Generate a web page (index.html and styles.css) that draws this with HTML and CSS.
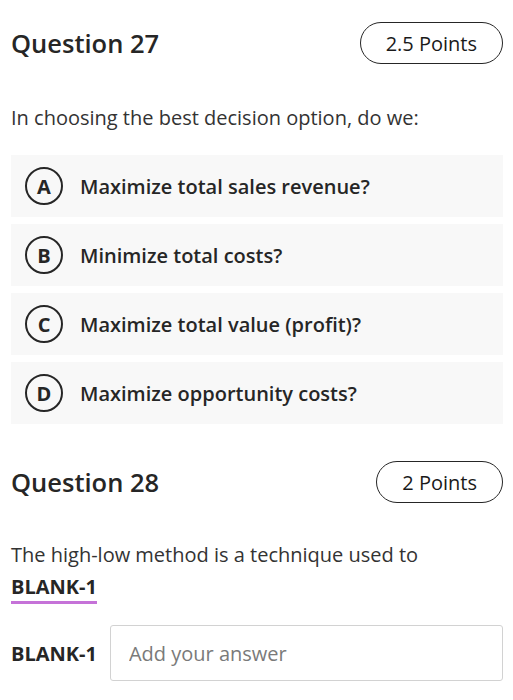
FILE: index.html
```html
<!DOCTYPE html>
<html lang="en">
<head>
<meta charset="utf-8">
<title>Questions</title>
<link rel="stylesheet" href="styles.css">
</head>
<body>
<main class="page">
  <section class="question q27">
    <header class="q-head">
      <h2 class="q-title">Question 27</h2>
      <span class="points">2.5 Points</span>
    </header>
    <p class="q-text">In choosing the best decision option, do we:</p>
    <ul class="options">
      <li class="option"><span class="letter">A</span><span class="opt-text">Maximize total sales revenue?</span></li>
      <li class="option"><span class="letter">B</span><span class="opt-text">Minimize total costs?</span></li>
      <li class="option"><span class="letter">C</span><span class="opt-text">Maximize total value (profit)?</span></li>
      <li class="option"><span class="letter">D</span><span class="opt-text">Maximize opportunity costs?</span></li>
    </ul>
  </section>
  <section class="question q28">
    <header class="q-head">
      <h2 class="q-title">Question 28</h2>
      <span class="points">2 Points</span>
    </header>
    <p class="q-text q-text-blank">The high-low method is a technique used to<br><span class="blank">BLANK-1</span></p>
    <div class="answer-row">
      <label class="answer-label" for="blank1">BLANK-1</label>
      <input class="answer-input" id="blank1" type="text" placeholder="Add your answer">
    </div>
  </section>
</main>
</body>
</html>
```

FILE: styles.css
```css
* { box-sizing: border-box; }
html, body { margin: 0; padding: 0; background: #fff; }
body {
  font-family: "Open Sans", "Liberation Sans", sans-serif;
  color: #262626;
}
.page { padding: 22px 10px 0 11px; }
.q-head {
  display: flex;
  justify-content: space-between;
  align-items: center;
  height: 42px;
}
.q-title {
  margin: 0;
  font-size: 25.5px;
  font-weight: 600;
  color: #262626;
}
.points {
  display: inline-flex;
  align-items: center;
  height: 42px;
  padding: 0 25px;
  border: 1.5px solid #262626;
  border-radius: 21px;
  font-size: 20px;
  font-weight: 400;
  color: #1a1a1a;
}
.q-text {
  margin: 38px 0 0;
  font-size: 20px;
  line-height: 32px;
  color: #333;
}
.options {
  list-style: none;
  margin: 21px 0 0;
  padding: 0;
  display: flex;
  flex-direction: column;
  gap: 7px;
}
.option {
  display: flex;
  align-items: center;
  gap: 17px;
  height: 62px;
  padding-left: 14px;
  background: #f8f8f8;
}
.letter {
  display: flex;
  align-items: center;
  justify-content: center;
  width: 38px;
  height: 38px;
  border: 2px solid #262626;
  border-radius: 50%;
  font-size: 20px;
  font-weight: 700;
  color: #262626;
}
.opt-text {
  font-size: 20px;
  font-weight: 600;
  color: #262626;
}
.q28 { margin-top: 37px; }
.q-text-blank { margin-top: 36px; }
.blank {
  font-weight: 700;
  color: #262626;
  padding-bottom: 1px;
  border-bottom: 3px solid #c572d8;
}
.answer-row {
  display: flex;
  align-items: center;
  gap: 13px;
  margin-top: 22px;
}
.answer-label {
  font-size: 20px;
  font-weight: 700;
  color: #262626;
}
.answer-input {
  flex: 1;
  height: 56px;
  padding: 0 18px;
  border: 1px solid #d2d2d2;
  border-radius: 3px;
  font-family: "Open Sans", "Liberation Sans", sans-serif;
  font-size: 20px;
  color: #262626;
}
.answer-input::placeholder { color: #7a7a7a; }
```
